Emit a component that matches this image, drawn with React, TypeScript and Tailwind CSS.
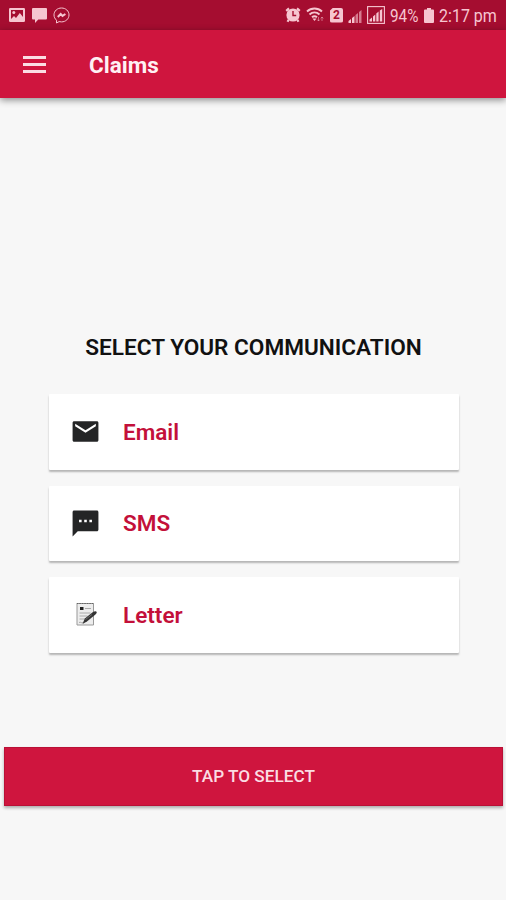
import type { ReactNode } from 'react'

function ImageIcon() {
  return (
    <svg className="h-[14px] w-4" viewBox="0 0 16 14" fill="currentColor">
      <path
        fillRule="evenodd"
        d="M1.500 0h13A1.300 1.300 0 0 1 16 1.300v11.400a1.300 1.300 0 0 1-1.300 1.300H1.300A1.300 1.300 0 0 1 0 12.700V1.300A1.300 1.300 0 0 1 1.500 0ZM2 2v9l3-3 2 2 3.800-5L14 9V2Z"
      />
      <circle cx="4.800" cy="4.600" r="1.500" />
    </svg>
  )
}

function MessageIcon() {
  return (
    <svg className="h-[15px] w-[15px]" viewBox="0 0 15 15" fill="currentColor">
      <path d="M1 0h13a1 1 0 0 1 1 1v9.500a1 1 0 0 1-1 1H6.300L3 15v-3.500H1a1 1 0 0 1-1-1V1a1 1 0 0 1 1-1Z" />
    </svg>
  )
}

function MessengerIcon() {
  return (
    <svg className="h-[17px] w-[17px]" viewBox="0 0 17 17" fill="none" stroke="currentColor">
      <path d="M8.500 1C4.300 1 1 4 1 7.900c0 2.200 1 4 2.500 5.300V16l2.600-1.400c.8.200 1.600.300 2.400.300 4.200 0 7.500-3.100 7.500-7S12.700 1 8.500 1Z" />
      <path d="m4.800 10 2.900-3 1.800 1.900L12.400 7" strokeWidth="2" />
    </svg>
  )
}

function AlarmIcon() {
  return (
    <svg className="h-4 w-4" viewBox="0 0 16 16" fill="none" stroke="currentColor">
      <circle cx="8" cy="8" r="6.600" fill="currentColor" stroke="none" />
      <path d="m1.200 3.800 2.800-2.400m10.800 2.400L12 1.400M3.700 12.800 2.500 14.800m9.800-2 1.200 2" strokeWidth="2.200" />
      <path d="M8 4v4.500h3.200" stroke="#a50d30" strokeWidth="1.400" />
    </svg>
  )
}

function WifiIcon() {
  return (
    <svg className="h-4 w-[19px]" viewBox="0 0 19 16" fill="none" stroke="currentColor">
      <path d="M1 4.500c4.300-4 10.700-4 15 0M3.500 7.500c3-2.700 7-2.700 10 0M6 10.300c1.500-1.300 3.500-1.300 5 0" strokeWidth="1.900" />
      <path d="M6.500 11.500h4l-2 2.500Z" fill="currentColor" stroke="none" />
      <path d="M12.500 10v4m-1.300-1.400 1.300 1.400 1.300-1.400M16 14v-4m-1.300 1.400L16 10l1.300 1.400" strokeWidth=".9" opacity=".55" />
    </svg>
  )
}

function SimIcon() {
  return (
    <span className="flex h-[15px] w-[13px] items-center justify-center rounded-[2px] bg-[#f6c5d0] text-[12px] leading-none font-bold text-[#a50d30] [clip-path:polygon(25%_0,100%_0,100%_100%,0_100%,0_20%)]">
      2
    </span>
  )
}

function SignalIcon() {
  return (
    <svg className="h-[15px] w-[14px]" viewBox="0 0 14 15" fill="currentColor">
      <path d="M.5 15v-2L3 11v4zM4 15v-5l2.500-2v7z" />
      <path d="M7.500 15V7L10 5v10zM11 15V4l2.500-2v13z" opacity=".6" />
    </svg>
  )
}

function BoxedSignalIcon() {
  return (
    <svg className="h-[18px] w-[18px]" viewBox="0 0 18 18" fill="currentColor">
      <rect x=".6" y=".6" width="16.800" height="16.800" fill="none" stroke="currentColor" strokeWidth="1.100" />
      <path d="M2.500 15.500v-2L5 11.500v4zM6 15.500v-5l2.300-2v7zM9.300 15.500v-8l2.300-2v10zM12.800 15.500v-11L15.200 3v12.500z" />
    </svg>
  )
}

function BatteryIcon() {
  return (
    <svg className="h-[15px] w-[10px]" viewBox="0 0 10 15" fill="currentColor">
      <path d="M3 0h4v1.500h2a1 1 0 0 1 1 1V14a1 1 0 0 1-1 1H1a1 1 0 0 1-1-1V2.500a1 1 0 0 1 1-1h2Z" />
    </svg>
  )
}

function MailIcon() {
  return (
    <svg className="size-[31px]" viewBox="0 0 24 24" fill="#242526">
      <path d="M20.800 4H3.200C2.500 4 2 4.500 2 5.200v13.600c0 .700.500 1.200 1.200 1.200h17.600c.700 0 1.200-.500 1.200-1.200V5.200c0-.700-.500-1.200-1.200-1.200zM20 8l-8 5-8-5V6l8 5 8-5v2z" />
    </svg>
  )
}

function SmsIcon() {
  return (
    <svg className="size-[31px]" viewBox="0 0 24 24" fill="#242526">
      <path d="M20.800 2H3.200C2.500 2 2 2.500 2 3.200V22l4-4h14.800c.700 0 1.200-.500 1.200-1.200V3.200c0-.700-.500-1.200-1.200-1.200zM9 11H7V9h2v2zm4 0h-2V9h2v2zm4 0h-2V9h2v2z" />
    </svg>
  )
}

function LetterIcon() {
  return (
    <svg className="size-[31px]" viewBox="0 0 31 31" fill="none">
      <path d="M7 4.500h16.500v21.500H7Z" fill="#ededed" stroke="#999" />
      <path d="M6.800 4.500h17" stroke="#666" strokeDasharray="1.500 1" />
      <path d="M15 9.500h6M9.500 14h11M9.500 17h8M9.500 20h5" stroke="#aaa" />
      <path d="M10 8h3.500v3H10Z" fill="#222" />
      <path d="M9 23.500c2-1 2 1 4 0" stroke="#aaa" />
      <path d="m12.500 25 2.300-5.500 8.200-6.500c1.700-1.200 3.400-1 3.700 0 .2 1-.6 2-1.800 3l-8 6.500Z" fill="#333" />
      <path d="m15.500 20.500 6.500-5" stroke="#777" strokeWidth=".8" />
    </svg>
  )
}

function OptionCard({ icon, label }: { icon: ReactNode; label: string }) {
  return (
    <button className="flex h-[75.5px] w-full items-center gap-[22px] rounded-[1px] bg-white pl-[21px] text-left shadow-[0_2px_2px_rgba(0,0,0,0.27)]">
      {icon}
      <span className="text-[22.5px] leading-none font-semibold text-[#c3103a]">{label}</span>
    </button>
  )
}

export default function App() {
  return (
    <div className="flex h-[900px] w-[506px] flex-col overflow-hidden bg-[#f7f7f7] font-['Roboto',sans-serif]">
      <div className="flex h-[30px] shrink-0 items-center justify-between bg-[#a50d30] pr-[9px] pl-[9px] text-[#f6c5d0]">
        <div className="flex items-center gap-[6.5px]">
          <ImageIcon />
          <MessageIcon />
          <MessengerIcon />
        </div>
        <div className="flex items-center gap-[5px]">
          <AlarmIcon />
          <WifiIcon />
          <SimIcon />
          <SignalIcon />
          <BoxedSignalIcon />
          <span className="w-[29px] pt-0.5 text-[18px] leading-none whitespace-nowrap">
            <span className="inline-block origin-left scale-x-[0.85]">94%</span>
          </span>
          <BatteryIcon />
          <span className="w-[58px] pt-0.5 text-[18px] leading-none whitespace-nowrap">
            <span className="inline-block origin-left scale-x-[0.89]">2:17 pm</span>
          </span>
        </div>
      </div>

      <header className="flex h-[68px] shrink-0 items-center gap-[43px] bg-[#cf153e] pl-[23px] shadow-[0_2px_7px_rgba(0,0,0,0.45)]">
        <button className="flex w-[23px] flex-col gap-1" aria-label="Menu">
          <span className="h-[3px] bg-[#fbdce3]" />
          <span className="h-[3px] bg-[#fbdce3]" />
          <span className="h-[3px] bg-[#fbdce3]" />
        </button>
        <h1 className="pt-[3px] text-[22.5px] leading-none font-bold text-[#fff0f3]">Claims</h1>
      </header>

      <main className="flex flex-col">
        <h2 className="mt-[236px] pl-px text-center text-[22.6px] leading-7 font-semibold whitespace-nowrap text-[#111]">
          SELECT YOUR COMMUNICATION
        </h2>
        <div className="mt-8 ml-[49px] flex w-[410px] flex-col gap-4">
          <OptionCard icon={<MailIcon />} label="Email" />
          <OptionCard icon={<SmsIcon />} label="SMS" />
          <OptionCard icon={<LetterIcon />} label="Letter" />
        </div>
        <button className="mt-[94.5px] mr-[3px] ml-1 h-[58.5px] border border-[#ba1036] bg-[#cf153e] pt-0.5 text-[17.2px] font-medium text-[#fbdce3] shadow-[0_2px_3px_rgba(0,0,0,0.3)]">
          TAP TO SELECT
        </button>
      </main>
    </div>
  )
}
